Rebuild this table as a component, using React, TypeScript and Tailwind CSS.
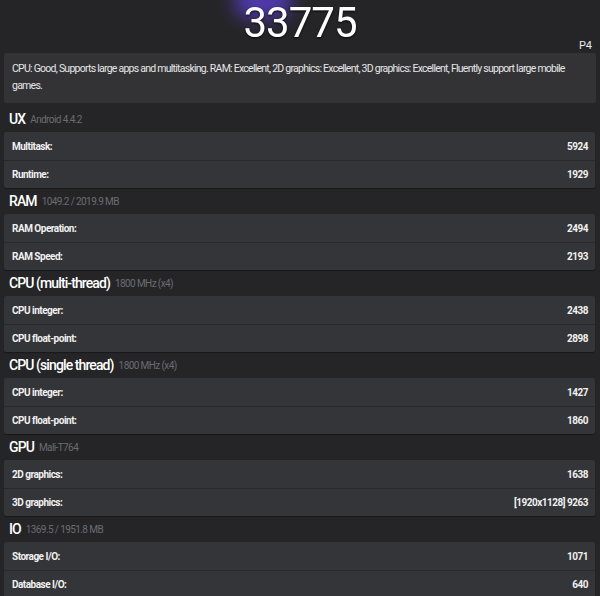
import React from "react";

type Row = { label: string; value: string };
type Section = { title: string; sub: string; rows: Row[] };

const sections: Section[] = [
  {
    title: "UX",
    sub: "Android 4.4.2",
    rows: [
      { label: "Multitask:", value: "5924" },
      { label: "Runtime:", value: "1929" },
    ],
  },
  {
    title: "RAM",
    sub: "1049.2 / 2019.9 MB",
    rows: [
      { label: "RAM Operation:", value: "2494" },
      { label: "RAM Speed:", value: "2193" },
    ],
  },
  {
    title: "CPU (multi-thread)",
    sub: "1800 MHz (x4)",
    rows: [
      { label: "CPU integer:", value: "2438" },
      { label: "CPU float-point:", value: "2898" },
    ],
  },
  {
    title: "CPU (single thread)",
    sub: "1800 MHz (x4)",
    rows: [
      { label: "CPU integer:", value: "1427" },
      { label: "CPU float-point:", value: "1860" },
    ],
  },
  {
    title: "GPU",
    sub: "Mali-T764",
    rows: [
      { label: "2D graphics:", value: "1638" },
      { label: "3D graphics:", value: "[1920x1128] 9263" },
    ],
  },
  {
    title: "IO",
    sub: "1369.5 / 1951.8 MB",
    rows: [
      { label: "Storage I/O:", value: "1071" },
      { label: "Database I/O:", value: "640" },
    ],
  },
];

const App = () => {
  return (
    <div
      className="w-[600px] h-[596px] overflow-hidden bg-[#252528] text-white"
      style={{ fontFamily: "Roboto, 'Liberation Sans', sans-serif" }}
    >
      {/* score */}
      <div className="relative h-[38px] flex items-start justify-center">
        <div className="absolute left-[234px] top-[-16px] h-[34px] w-[58px] rounded-full bg-[#5b3fd0] opacity-80 blur-[9px]" />
        <div className="relative mt-[2px] text-[42px] leading-[42px] tracking-[-1px] drop-shadow-[0_1px_1px_rgba(0,0,0,0.8)]">
          33775
        </div>
      </div>
      <div className="h-[15px] flex justify-end pr-[8px] text-[11px] leading-[15px] text-[#e8e8e8]">
        P4
      </div>

      {/* summary */}
      <div className="mx-[4px] h-[50px] bg-[#333336] rounded-[2px] px-[8px] pt-[7px] text-[10.5px] leading-[17px] tracking-[-0.75px] text-[#e6e6e6]">
        CPU: Good, Supports large apps and multitasking. RAM: Excellent, 2D graphics: Excellent, 3D graphics: Excellent, Fluently support large mobile games.
      </div>

      <div className="mt-[3px] flex flex-col">
        {sections.map((s) => (
          <div key={s.title} className="flex flex-col">
            <div className="h-[26px] flex items-center gap-[5px] pl-[9px]">
              <span className="text-[14px] font-medium tracking-[-0.9px] text-white">
                {s.title}
              </span>
              <span className="text-[10px] tracking-[-0.6px] text-[#6c6c70] mt-[1px]">
                {s.sub}
              </span>
            </div>
            <div className="mx-[4px] mr-[5px] bg-[#343538] rounded-[2px] shadow-[0_1px_1px_rgba(0,0,0,0.35)]">
              {s.rows.map((r, i) => (
                <div
                  key={r.label}
                  className={
                    "h-[28px] flex items-center justify-between pl-[8px] pr-[7px] text-[10px] font-bold tracking-[-0.5px] text-[#f0f0f0] " +
                    (i > 0 ? "border-t border-[#2a2a2d]" : "")
                  }
                >
                  <span>{r.label}</span>
                  <span>{r.value}</span>
                </div>
              ))}
            </div>
          </div>
        ))}
      </div>
    </div>
  );
};

export default App;
